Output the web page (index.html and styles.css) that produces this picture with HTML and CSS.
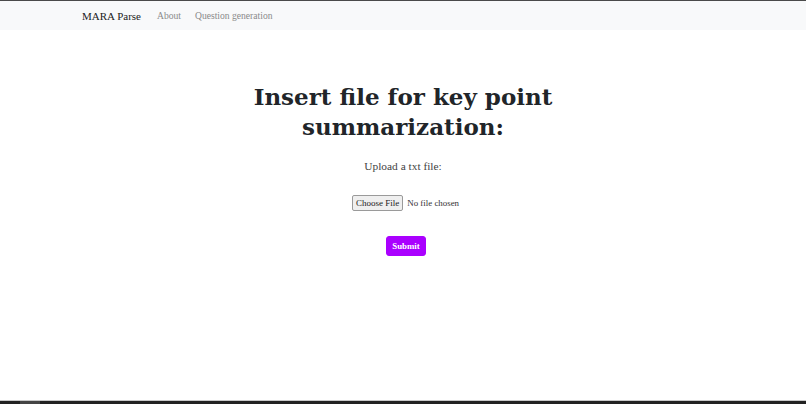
FILE: index.html
```html
<!DOCTYPE html>
<html lang="en">
<head>
<meta charset="utf-8">
<title>MARA Parse</title>
<link rel="stylesheet" href="styles.css">
</head>
<body>
<div class="page">
  <nav class="navbar">
    <a class="brand" href="#">MARA Parse</a>
    <a class="nav-link" href="#">About</a>
    <a class="nav-link" href="#">Question generation</a>
  </nav>
  <main class="main">
    <h1 class="title">Insert file for key point<br>summarization:</h1>
    <form class="upload">
      <label class="label" for="file">Upload a txt file:</label>
      <input class="file" id="file" type="file">
      <button class="submit" type="button">Submit</button>
    </form>
  </main>
  <div class="bottom-bar"><span class="bottom-tab"></span></div>
</div>
</body>
</html>
```
FILE: styles.css
```css
html, body {
  margin: 0;
  padding: 0;
  height: 100%;
}
body {
  font-family: "Liberation Serif", Georgia, serif;
  color: #212529;
  background: #fff;
}
.page {
  display: flex;
  flex-direction: column;
  min-height: 100vh;
  border-top: 1px solid #4a4a4a;
  box-sizing: border-box;
}
.navbar {
  display: flex;
  align-items: center;
  height: 29px;
  background: #f8f9fa;
  padding-left: 82px;
}
.brand {
  font-size: 11px;
  color: #222;
  text-decoration: none;
  margin-right: 16px;
}
.nav-link {
  font-size: 9.6px;
  color: #8a8a8a;
  text-decoration: none;
  margin-right: 14px;
}
.main {
  flex: 1;
  display: flex;
  flex-direction: column;
  align-items: center;
  padding-top: 52px;
}
.title {
  margin: 0;
  font-family: "DejaVu Serif", Georgia, serif;
  font-size: 23px;
  line-height: 30px;
  font-weight: bold;
  text-align: center;
  color: #212529;
}
.upload {
  display: flex;
  flex-direction: column;
  align-items: center;
}
.label {
  font-size: 11.4px;
  color: #444;
  margin-top: 18px;
}
.file {
  font-family: inherit;
  font-size: 8.9px;
  color: #333;
  margin-top: 23px;
  margin-left: 6px;
  width: 108px;
}
.file::file-selector-button {
  font-family: inherit;
  font-size: 9px;
  background: #efefef;
  border: 1px solid #9a9a9a;
  border-radius: 2px;
  height: 16px;
  padding: 0 3px;
  margin-right: 4px;
  color: #222;
}
.submit {
  margin-top: 25px;
  margin-left: 6px;
  font-family: inherit;
  font-size: 8.8px;
  font-weight: bold;
  color: #fff;
  background: #aa00ff;
  border: 1px solid #aa00ff;
  border-radius: 3px;
  width: 40px;
  height: 20px;
  padding: 0;
}
.bottom-bar {
  height: 3px;
  border-top: 1px solid #c8c8c8;
  background: #222;
  display: flex;
}
.bottom-tab {
  width: 20px;
  margin-left: 20px;
  background: #444;
}
```
